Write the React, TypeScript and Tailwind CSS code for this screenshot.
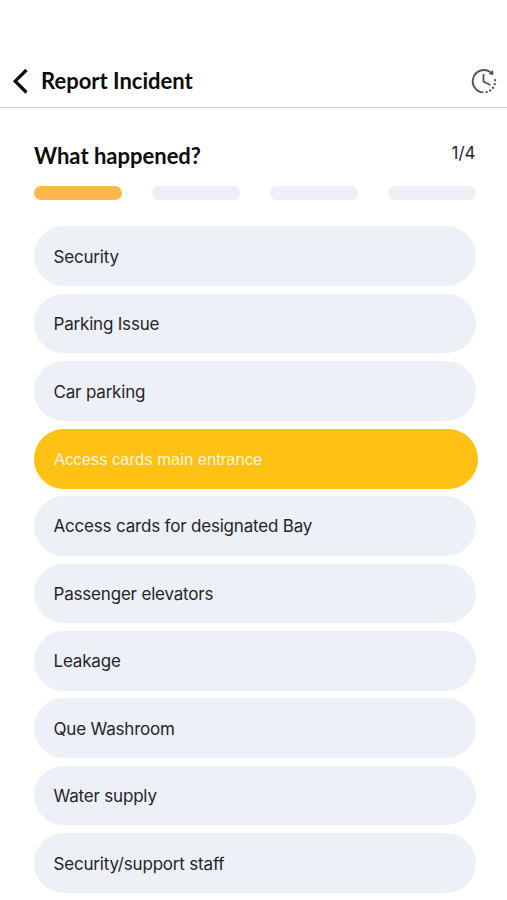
import { useState } from "react";

interface Category {
  id: number;
  label: string;
}

const categories: Category[] = [
  { id: 1, label: "Security" },
  { id: 2, label: "Parking Issue" },
  { id: 3, label: "Car parking" },
  { id: 4, label: "Access cards main entrance" },
  { id: 5, label: "Access cards for designated Bay" },
  { id: 6, label: "Passenger elevators" },
  { id: 7, label: "Leakage" },
  { id: 8, label: "Que Washroom" },
  { id: 9, label: "Water supply" },
  { id: 10, label: "Security/support staff" },
];

const steps = [1, 2, 3, 4];

const BackIcon = () => (
  <svg width="16" height="26" viewBox="0 0 16 26" fill="none">
    <path d="M14.5 2 L3.2 13.2 L14.5 24.5" stroke="#0a0a0a" strokeWidth="3.2" />
  </svg>
);

const HistoryIcon = () => (
  <svg width="28" height="28" viewBox="0 0 28 28" fill="none" stroke="#555555">
    <path d="M20.6 5.2 A11.2 11.2 0 1 0 13.4 25.4" strokeWidth="1.9" />
    <path d="M18.6 7.2 L23.4 7.8 L23 3 Z" fill="#444444" stroke="none" />
    <path d="M13.5 7 V14.6 L20.4 18" strokeWidth="1.8" />
    {/* dotted part of the dial */}
    <path
      d="M16.6 25 A11.2 11.2 0 0 0 24.2 9.6"
      strokeWidth="2.3"
      strokeLinecap="round"
      strokeDasharray="0.1 3.8"
    />
  </svg>
);

const App = () => {
  const [selected, setSelected] = useState(4);
  const currentStep = 1;

  return (
    <div className="h-[900px] w-[507px] overflow-hidden bg-white font-['Inter',sans-serif] text-[#24262b]">
      <header className="flex h-[108px] items-end border-b border-[#d0d0d0] pl-3 pr-[9px]">
        <button className="mb-[13px]" aria-label="Back">
          <BackIcon />
        </button>
        <h1 className="mb-[11px] ml-[13px] font-['Lato',sans-serif] text-[22px] leading-[30px] font-bold text-[#0c0c0c]">
          Report Incident
        </h1>
        <button className="mb-3 ml-auto" aria-label="History">
          <HistoryIcon />
        </button>
      </header>

      <main className="pl-[34px] pr-[31.5px] pt-[33px]">
        <div className="flex items-start justify-between">
          <h2 className="font-['Lato',sans-serif] text-[22px] leading-[30px] font-bold text-[#0c0c0c]">
            What happened?
          </h2>
          <span className="text-[17px] leading-[25px]">
            {currentStep}/{steps.length}
          </span>
        </div>

        <div className="mt-[14.5px] flex gap-[30px]">
          {steps.map((step) => (
            <div
              key={step}
              className={`h-[14.5px] flex-1 rounded-full ${step <= currentStep ? "bg-[#fdb64c]" : "bg-[#edf0f6]"}`}
            />
          ))}
        </div>

        <ul className="mt-[26.4px] flex flex-col gap-[7.95px]">
          {categories.map((category) => (
            <li key={category.id} className="h-[59.5px]">
              <button
                onClick={() => setSelected(category.id)}
                className={
                  category.id === selected
                    ? "flex h-[60.5px] w-[444px] items-center rounded-full bg-[#fec114] pl-[20px] text-left font-['Liberation_Sans',sans-serif] text-[16.5px] tracking-[0.04px] text-[#fff6d8]"
                    : "flex h-full w-full items-center rounded-full bg-[#edf0f6] pt-[2.5px] pl-[19.5px] text-left text-[17px] tracking-[-0.19px]"
                }
              >
                {category.label}
              </button>
            </li>
          ))}
        </ul>
      </main>
    </div>
  );
};

export default App;
